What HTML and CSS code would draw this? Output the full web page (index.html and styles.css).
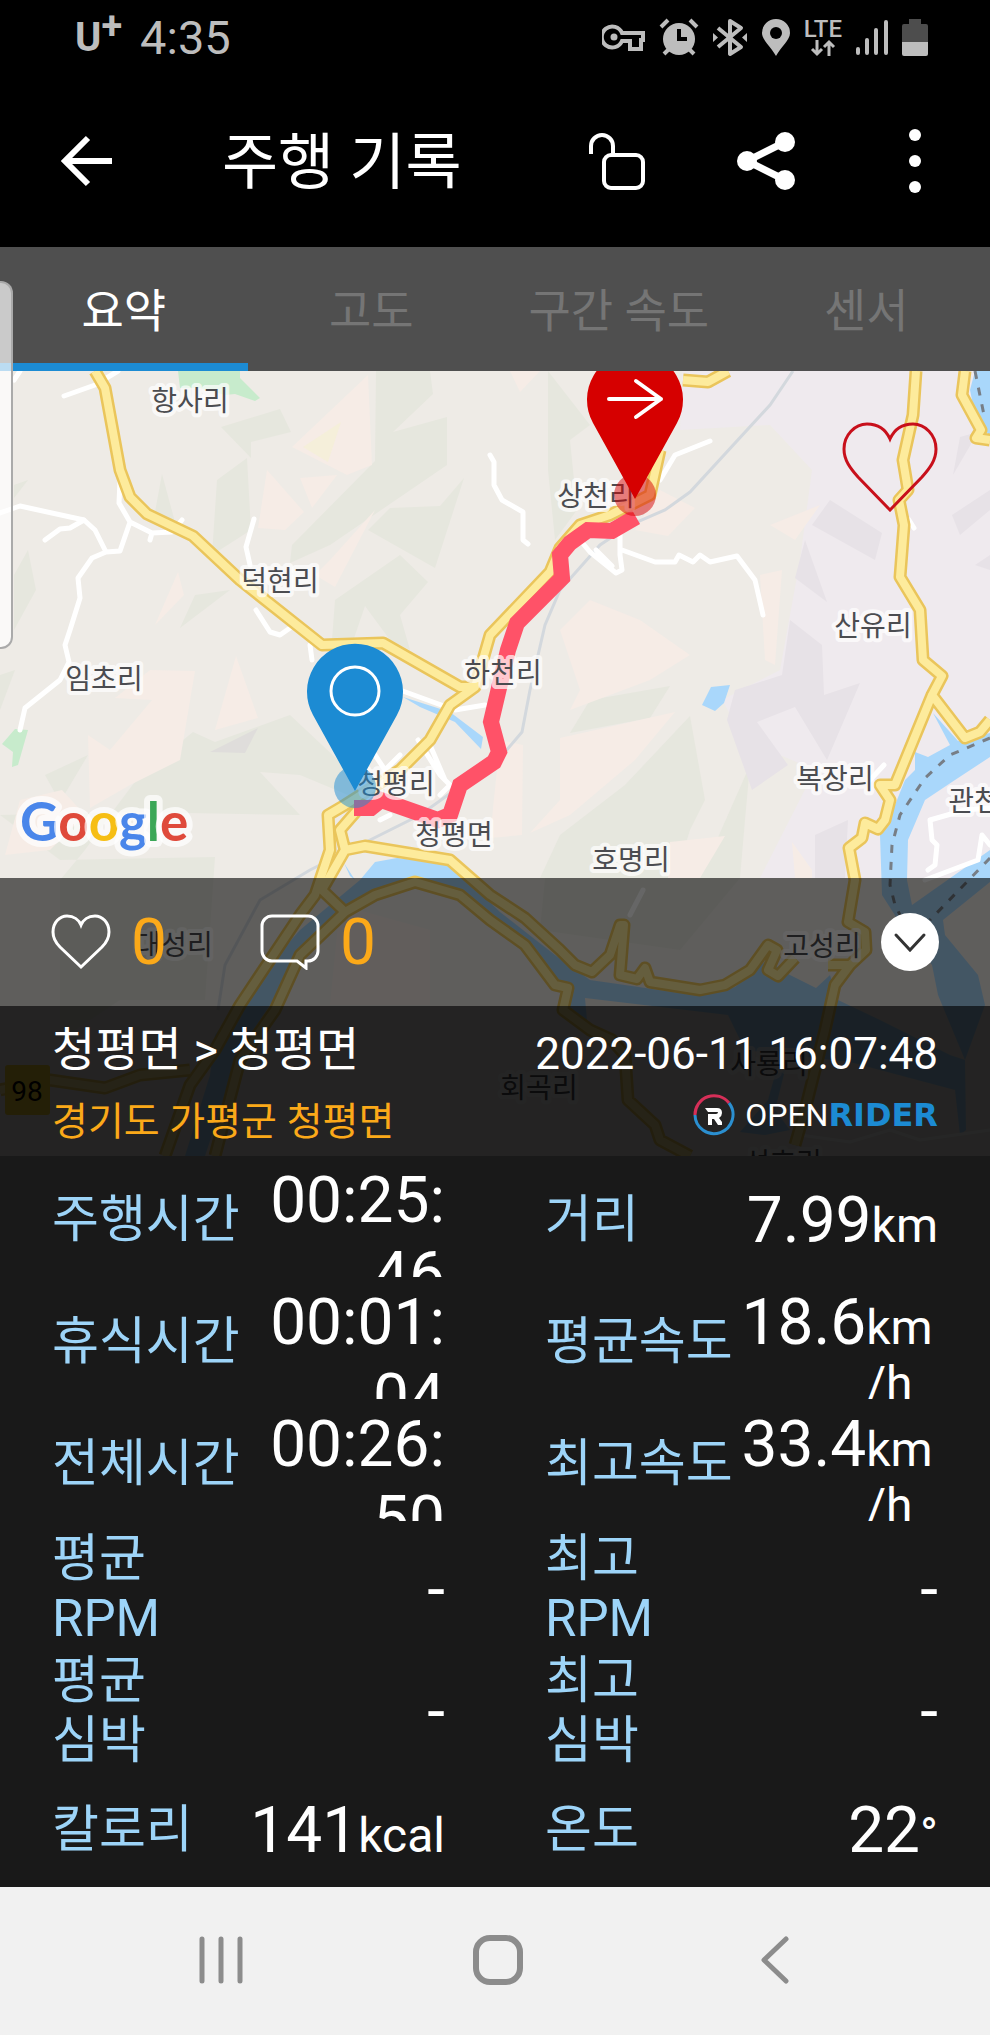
FILE: index.html
```html
<!DOCTYPE html>
<html lang="ko">
	<head>
		<meta charset="utf-8">
		<title>주행 기록</title>
		<meta name="viewport" content="width=device-width, initial-scale=1.0">
		<link rel="stylesheet" href="styles.css">
	</head>
	<body>
		<div class="statusbar">
			<span class="carrier">U<sup>+</sup></span>
			<span class="clock">4:35</span>
			<div class="status-icons">
				<svg width="44" height="40" viewBox="0 0 44 40">
					<g fill="none" stroke="#bdbdbd" stroke-width="4">
						<path d="M20 15H41V22H39V31H28V23H20A10.500 10.500 0 1 1 20 15Z"/>
					</g>
					<circle cx="12" cy="19" r="3.500" fill="#bdbdbd"/>
				</svg>
				<svg width="40" height="40" viewBox="0 0 40 40">
					<circle cx="20" cy="21" r="16" fill="#bdbdbd"/>
					<path d="M2 9L9 2M38 9L31 2M5 36L10 31M35 36L30 31" stroke="#bdbdbd" stroke-width="4"/>
					<path d="M20 11V21H28" fill="none" stroke="#000" stroke-width="4"/>
				</svg>
				<svg width="36" height="40" viewBox="0 0 36 40">
					<path d="M6 10L29 29L18 36V3L29 10L6 29" fill="none" stroke="#bdbdbd" stroke-width="4" stroke-linejoin="round"/>
					<path d="M1 15L6 19.500L1 24ZM35 15L30 19.500L35 24Z" fill="#bdbdbd"/>
				</svg>
				<svg width="30" height="40" viewBox="0 0 30 40">
					<path d="M15 38C10 29 1 22 1 15A14 14 0 0 1 29 15C29 22 20 29 15 38Z" fill="#bdbdbd"/>
					<circle cx="15" cy="15" r="6" fill="#000"/>
				</svg>
				<span class="lte">
					LTE
					<svg width="26" height="18" viewBox="0 0 26 18">
						<path d="M7 1V15M2 10L7 15L12 10M19 17V3M14 8L19 3L24 8" fill="none" stroke="#bdbdbd" stroke-width="3"/>
					</svg>
				</span>
				<svg width="34" height="40" viewBox="0 0 34 40">
					<path d="M3 31V35M12 22V35M21 12V35M31 4V35" stroke="#bdbdbd" stroke-width="4" stroke-linecap="round"/>
				</svg>
				<svg width="26" height="40" viewBox="0 0 26 40">
					<path d="M7 1H19V6H24A2 2 0 0 1 26 8V25H0V8A2 2 0 0 1 2 6H7Z" fill="#4d4d4d"/>
					<path d="M0 24H26V36A2 2 0 0 1 24 38H2A2 2 0 0 1 0 36Z" fill="#bdbdbd"/>
				</svg>
			</div>
		</div>

		<header class="appbar">
			<button class="icon-btn" aria-label="뒤로">
				<svg width="54" height="58" viewBox="0 0 54 58">
					<path d="M52 29H5M28 6L5 29L28 52" fill="none" stroke="#fff" stroke-width="6"/>
				</svg>
			</button>
			<h1>주행 기록</h1>
			<div class="actions">
				<button class="icon-btn" aria-label="잠금 해제">
					<svg width="58" height="58" viewBox="0 0 58 58">
						<path d="M3 22V14A11 11 0 0 1 25 14V23" fill="none" stroke="#fff" stroke-width="4"/>
						<rect x="16" y="23" width="39" height="33" rx="7" fill="none" stroke="#fff" stroke-width="4"/>
					</svg>
				</button>
				<button class="icon-btn" aria-label="공유">
					<svg width="58" height="58" viewBox="0 0 58 58">
						<path d="M48 10L10 29L48 48" fill="none" stroke="#fff" stroke-width="7"/>
						<g fill="#fff">
							<circle cx="48" cy="10" r="10"/>
							<circle cx="10" cy="29" r="10"/>
							<circle cx="48" cy="48" r="10"/>
						</g>
					</svg>
				</button>
				<button class="icon-btn" aria-label="더보기">
					<svg width="58" height="66" viewBox="0 0 58 66">
						<g fill="#fff">
							<circle cx="29" cy="7" r="6"/>
							<circle cx="29" cy="33" r="6"/>
							<circle cx="29" cy="59" r="6"/>
						</g>
					</svg>
				</button>
			</div>
		</header>

		<nav class="tabs" role="tablist">
			<button role="tab" class="tab active" aria-selected="true">요약</button>
			<button role="tab" class="tab">고도</button>
			<button role="tab" class="tab">구간 속도</button>
			<button role="tab" class="tab">센서</button>
			<span class="edge-handle"></span>
		</nav>

		<main>
			<section class="map-area">
				<svg class="map" viewBox="0 371 990 785" preserveAspectRatio="xMidYMid slice">
					<defs>
						<g id="roads">
							<path d="M95 371L105 388L120 470L130 497L147 514L193 536L240 580L322 645L383 643L460 687L475 687"/>
							<path d="M660 450L650 495L610 515L580 525L560 548L550 572L490 635L475 687L450 705L430 740L400 770L345 805L328 815L330 850L315 895L300 915L240 1005L215 1050L190 1085L165 1156"/>
							<path d="M683 380L708 382L728 371M965 371L962 395L981 430L976 438L990 440"/>
							<path d="M360 807L340 830L345 850L365 846L450 860L490 895L525 918L560 950L575 965L592 972L610 955L620 925L624 925L620 975L637 979L645 968L650 982L700 990L725 985L750 970L768 945L777 950L768 970L778 976L795 958M345 850L322 890L345 912L375 895L415 882L460 895L490 920L525 945L555 985L568 988L563 1010L590 1030L612 1040L625 1055L628 1100L655 1125L660 1140L690 1156M345 912L300 955L275 1010L240 1060L215 1156M0 1090L50 1080L105 1088L140 1075L190 1070"/>
							<path d="M916 371L913 415L903 460L908 490L899 500L904 525L900 577L920 610L923 660L942 676L932 695L965 738L980 732L990 720M932 695L895 785L880 785L890 800L885 820L878 829L865 823L862 838L849 848L855 880L848 922L865 932L866 950L850 965H828M850 965L835 985L825 1030L805 1110L795 1145"/>
						</g>
					</defs>
					<rect y="371" width="990" height="785" fill="#eeebe6"/>

					<!-- terrain -->
					<path fill="#efeaee" d="M682 371H990V878H760L815 770L745 740L722 700L780 670L800 560L812 470L770 425L680 430Z"/>
					<g fill="#e6e7de">
						<path d="M221 427L280 409L291 432L251 442V458ZM217 480L247 458L251 530L212 555ZM376 371H430L433 394L393 432L447 417V465L330 545L290 563L292 545L375 461Z"/>
						<path d="M464 478L435 568L368 530L390 508L440 506ZM335 600L400 555L428 582L400 615L410 650L390 640L365 606L350 650L332 640ZM162 474L175 522L155 512ZM180 628L195 595L230 590ZM14 575L28 550L36 590L14 630Z"/>
						<path d="M140 775L193 732L215 742L290 715L338 760L360 800L300 775L260 772L300 815L130 812L0 815L60 860L215 857L205 1000H120L60 1040V880L85 850L110 815ZM548 371L590 425L570 440L577 510L555 540L548 470Z"/>
						<path d="M590 700L670 686L650 718L570 733ZM690 716L705 800L690 830L675 878H540L560 835L625 785ZM750 765L745 820L740 878L680 950L540 930L545 878H700Z"/>
						<path d="M0 675L15 670L0 710ZM45 775L88 755L60 802ZM14 485L28 480L14 498Z"/>
					</g>
					<g fill="#f6ece6">
						<path d="M368 375L372 465L347 475L292 447ZM267 470L304 512L285 530L258 528ZM300 478L337 475L312 508ZM375 510L335 587L315 575L330 560ZM178 572L184 595L155 625Z"/>
						<path d="M150 670L195 671L180 760L130 785L90 808L88 735L110 750L152 700L115 698ZM236 656L258 718L215 730ZM20 800L62 790L85 815L50 850L5 855Z"/>
						<path d="M590 600L640 620L690 655L650 680L570 710L580 690L560 630ZM560 738L675 712L635 760L570 815L530 833L560 800ZM500 740L523 745L522 835L490 838ZM670 842L725 836L700 878H668ZM660 490L695 508L668 536L635 530ZM770 525L820 505L795 540ZM760 575L782 570L775 665L765 660Z"/>
						<path d="M792 842L812 870V878H795ZM510 371L540 371L520 392ZM340 905L430 930V1005H330Z"/>
					</g>
					<path fill="#f5efda" d="M341 422L328 462L303 447Z"/>
					<g fill="#e7e2e7">
						<path d="M790 620L822 645L824 695L860 683L827 760L795 707L757 722L788 765L752 790L727 720L735 690L782 675ZM830 500L882 533L875 560L812 525ZM805 540L827 602L795 578ZM960 437L978 432L953 475ZM990 490L952 515L960 535L990 510ZM815 835L848 820L845 878H815ZM975 565L990 555V570Z"/>
						<path fill="#dfdddb" d="M210 752L258 728L245 753Z"/>
					</g>
					<g fill="#c7ebcc">
						<path d="M178 371H240V378L260 398L255 401L235 394L225 395L200 388H180ZM2 744L15 729L28 730L18 765L12 767L13 752Z"/>
					</g>

					<!-- water -->
					<g fill="#a9d7fb">
						<path d="M975 371H990V436L976 420L970 390ZM711 687L730 685L724 703L715 711L702 705ZM403 697L450 712L483 737L481 749L455 722L420 707ZM344 863L355 880L350 876Z"/>
						<path d="M933 713L958 741L990 733V757L955 780L925 800L908 840L907 880L912 905L990 850V882L943 920L945 935L978 975L985 1005L965 1060L966 1130L960 1135L955 1090L850 1062L745 1050L728 1015L585 998L587 1020L570 1020L560 985L520 943L460 900L415 885L370 900L340 915L295 960L270 1005L240 1050L205 1156H185L210 1075L215 1035L260 975L300 930L360 880L375 862L397 858L450 864L500 912L555 955L590 980L625 985L700 996L735 987L767 960L790 975L816 988L830 975L838 1000L880 1020L950 1055L965 1060L938 995L932 965L898 920L882 895L880 835L895 805L905 780L915 770V752L928 757L950 745Z"/>
						<path d="M775 1075L785 1070L775 1110L790 1130L765 1135L740 1132L768 1100Z"/>
					</g>
					<path d="M990 738L950 755L925 778L900 815L892 845L890 885L895 905L905 925M990 858L930 920M975 371L985 420" fill="none" stroke="#777e86" stroke-width="3" stroke-dasharray="8 9"/>

					<!-- railway -->
					<path d="M793 371L770 405L690 492L665 510L630 525L600 545L560 590L545 625L530 690L522 732L500 758L420 815L310 870L260 900L225 965L218 1010" fill="none" stroke="#d3d8dd" stroke-width="3"/>

					<!-- small roads -->
					<g fill="none" stroke="#fff" stroke-width="5" stroke-linecap="round" stroke-linejoin="round">
						<path d="M64 396L95 385L118 371M14 380L20 371M0 513L20 506L84 520L70 528L60 529L45 540M84 520L95 530L106 552L120 551L130 522L119 503L120 480M106 552L92 558L78 578L80 598L70 630L65 645L69 662L60 680L25 708L20 730M130 522L152 533L172 532L182 520M150 540L152 533M254 519L246 547L250 565M256 610L270 632L280 635L290 628"/>
						<path d="M490 455L494 462V485L502 500L523 512V540L528 544M660 480L675 455L710 441M580 540L590 552L616 573L622 570L620 555V535M596 550L612 566M622 550L655 562L675 562L679 555L693 562L700 555L710 562L737 556L755 580L763 615M909 520L914 528"/>
						<path d="M400 690L455 710L485 705M310 645L312 660M375 755L385 770L400 755M418 740L440 775L450 785L440 795M430 745L445 780M340 835L370 800M380 820L390 815M870 780L884 765M990 808L965 810L930 820L932 840L937 845L935 865L928 870M925 880L978 860L982 835L990 845M630 915L643 890"/>
						<path stroke-width="3" d="M800 1135L850 1142L890 1130L920 1140L990 1130"/>
					</g>

					<!-- main roads: casing, then fill -->
					<use href="#roads" class="road road-case"/>
					<use href="#roads" class="road road-fill"/>

					<!-- ridden route -->
					<path d="M354 808L371 808L381 800L438 820L450 815L460 785L494 762L499 752L491 722L508 650L517 623L562 578L560 555L570 543L588 530L612 531L636 517" fill="none" stroke="#ff5268" stroke-width="16"/>

					<!-- place names -->
					<rect x="5" y="1065" width="45" height="50" rx="3" fill="#f1cd2e"/>
					<g class="place">
						<text x="190" y="411">항사리</text>
						<text x="280" y="591">덕현리</text>
						<text x="104" y="689">임초리</text>
						<text x="596" y="506">상천리</text>
						<text x="873" y="636">산유리</text>
						<text x="503" y="683">하천리</text>
						<text x="396" y="794">청평리</text>
						<text x="454" y="845">청평면</text>
						<text x="835" y="789">복장리</text>
						<text x="987" y="811">관천리</text>
						<text x="631" y="870">호명리</text>
						<text x="174" y="955">대성리</text>
						<text x="822" y="956">고성리</text>
						<text x="539" y="1098">회곡리</text>
						<text x="769" y="1074">사룡리</text>
						<text x="783" y="1173">성호리</text>
					</g>
					<text class="route-no" x="27" y="1101">98</text>

					<!-- start / finish pins -->
					<circle cx="635" cy="495" r="21" fill="#d60000" fill-opacity=".5"/>
					<g transform="translate(635 399)">
						<path d="M0 100L-42 24A48 48 0 1 1 42 24Z" fill="#d60000"/>
						<path d="M-26 0H26M1 -18L26 0L1 18" fill="none" stroke="#fff" stroke-width="4" stroke-linecap="round" stroke-linejoin="round"/>
					</g>
					<circle cx="355" cy="787" r="21" fill="#1c8bd3" fill-opacity=".5"/>
					<g transform="translate(355 691)">
						<path d="M0 100L-42 24A48 48 0 1 1 42 24Z" fill="#1c8bd3"/>
						<circle r="24" fill="none" stroke="#fff" stroke-width="3"/>
					</g>

					<text class="google" x="20" y="841"><tspan fill="#4a86ea">G</tspan><tspan fill="#df4a3b">o</tspan><tspan fill="#f6be14">o</tspan><tspan fill="#4a86ea">g</tspan><tspan fill="#3ba757">l</tspan><tspan fill="#df4a3b">e</tspan></text>
				</svg>

				<div class="map-view">
					<button class="icon-btn favorite" aria-label="즐겨찾기">
						<svg width="96" height="90" viewBox="0 0 96 90">
							<path d="M48 88L16 55C8 46 2 38 2 27C2 13 13 2 25 2C36 2 44 8 48 17C52 8 60 2 71 2C83 2 94 13 94 27C94 38 88 46 80 55Z" fill="none" stroke="#c8101b" stroke-width="3"/>
						</svg>
					</button>
				</div>

				<div class="social">
					<button class="count">
						<svg width="60" height="56" viewBox="0 0 60 56">
							<path d="M30 53L9 33C4 28 2 24 2 18C2 8 9 2 16 2C23 2 28 6 30 11C32 6 37 2 44 2C51 2 58 8 58 18C58 24 56 28 51 33Z" fill="none" stroke="#fff" stroke-width="3"/>
						</svg>
						0
					</button>
					<button class="count">
						<svg width="60" height="56" viewBox="0 0 60 56">
							<path d="M12 2H48A10 10 0 0 1 58 12V37A10 10 0 0 1 48 47H46V54L37 47H12A10 10 0 0 1 2 37V12A10 10 0 0 1 12 2Z" fill="none" stroke="#fff" stroke-width="3"/>
						</svg>
						0
					</button>
					<button class="icon-btn collapse" aria-label="접기">
						<svg width="58" height="58" viewBox="0 0 58 58">
							<circle cx="29" cy="29" r="29" fill="#fff"/>
							<path d="M15 22L29 37L43 22" fill="none" stroke="#333" stroke-width="3" stroke-linecap="round"/>
						</svg>
					</button>
				</div>

				<div class="ride-info">
					<div>
						<p class="ride-title">청평면 &gt; 청평면</p>
						<p class="ride-place">경기도 가평군 청평면</p>
					</div>
					<div class="ride-meta">
						<time datetime="2022-06-11T16:07:48">2022-06-11 16:07:48</time>
						<p class="brand">
							<svg width="42" height="42" viewBox="0 0 42 42">
								<path d="M2 21A19 19 0 0 1 36 9" fill="none" stroke="#d62f58" stroke-width="3"/>
								<path d="M36 9A19 19 0 1 1 2 21" fill="none" stroke="#2b8fd0" stroke-width="3"/>
								<path d="M12 14H24Q29 14 29 19Q29 22 26 24L29 28V31H25L21 25H19V31H15V20H23Q25 20 25 18H15Z" fill="#fff"/>
							</svg>
							<span class="open">OPEN</span><span class="rider">RIDER</span>
						</p>
					</div>
				</div>
			</section>

			<dl class="stats">
				<div class="stat long"><dt>주행시간</dt><dd>00:25:<wbr>46</dd></div>
				<div class="stat"><dt>거리</dt><dd>7.99<span class="unit">km</span></dd></div>
				<div class="stat long"><dt>휴식시간</dt><dd>00:01:<wbr>04</dd></div>
				<div class="stat speed"><dt>평균속도</dt><dd>18.6<span class="unit">km<wbr>/h</span></dd></div>
				<div class="stat long"><dt>전체시간</dt><dd>00:26:<wbr>50</dd></div>
				<div class="stat speed"><dt>최고속도</dt><dd>33.4<span class="unit">km<wbr>/h</span></dd></div>
				<div class="stat"><dt>평균 RPM</dt><dd>-</dd></div>
				<div class="stat"><dt>최고 RPM</dt><dd>-</dd></div>
				<div class="stat"><dt>평균 심박</dt><dd>-</dd></div>
				<div class="stat"><dt>최고 심박</dt><dd>-</dd></div>
				<div class="stat"><dt>칼로리</dt><dd>141<span class="unit">kcal</span></dd></div>
				<div class="stat"><dt>온도</dt><dd>22<span class="unit">°</span></dd></div>
			</dl>
		</main>

		<footer class="softkeys">
			<button class="icon-btn" aria-label="최근 앱">
				<svg width="46" height="50" viewBox="0 0 46 50">
					<path d="M4 4V46M23 4V46M42 4V46" stroke="#8c8c8c" stroke-width="5" stroke-linecap="round"/>
				</svg>
			</button>
			<button class="icon-btn" aria-label="홈">
				<svg width="50" height="50" viewBox="0 0 50 50">
					<rect x="3" y="3" width="44" height="44" rx="14" fill="none" stroke="#8c8c8c" stroke-width="6"/>
				</svg>
			</button>
			<button class="icon-btn" aria-label="뒤로">
				<svg width="30" height="50" viewBox="0 0 30 50">
					<path d="M26 4L4 25L26 46" fill="none" stroke="#8c8c8c" stroke-width="5" stroke-linecap="round" stroke-linejoin="round"/>
				</svg>
			</button>
		</footer>
	</body>
</html>
```
FILE: styles.css
```css
* {
	box-sizing: border-box;
	margin: 0;
	padding: 0;
}
body {
	background: #f1f1f1;
	color: #fff;
	font-family: Roboto, 'Noto Sans CJK KR', sans-serif;
}
button {
	border: none;
	background: none;
	color: inherit;
	font-family: inherit;
}
svg {
	display: block;
}
.icon-btn {
	flex: none;
}

/* status bar */
.statusbar {
	display: flex;
	align-items: center;
	height: 76px;
	padding: 0 62px 0 75px;
	background: #000;
	color: #bdbdbd;
}
.carrier {
	display: flex;
	font-size: 40px;
	font-weight: 700;
	line-height: 48px;
}
.carrier sup {
	font-size: 38px;
	line-height: 24px;
}
.clock {
	margin-left: 18px;
	font-size: 47px;
	line-height: 60px;
}
.status-icons {
	display: flex;
	align-items: center;
	gap: 13px;
	margin-left: auto;
}
.lte {
	display: flex;
	flex-direction: column;
	align-items: center;
	font-size: 24px;
	font-weight: 500;
	line-height: 20px;
}

/* title bar */
.appbar {
	display: flex;
	align-items: center;
	height: 171px;
	padding: 0 46px 2px 60px;
	background: #000;
}
.appbar h1 {
	padding-top: 4px;
	margin-left: 108px;
	font-size: 61px;
	font-weight: 400;
	line-height: 80px;
}
.actions {
	display: flex;
	align-items: center;
	gap: 91px;
	margin-left: auto;
}

/* tabs */
.tabs {
	position: relative;
	display: grid;
	grid-template-columns: repeat(4, 1fr);
	height: 124px;
	background: #4f4f4f;
}
.tab {
	padding-bottom: 4px;
	border-top: 8px solid transparent;
	border-bottom: 8px solid transparent;
	color: #757575;
	font-size: 46px;
}
.tab.active {
	border-bottom-color: #1c8bd3;
	color: #fff;
}
.edge-handle {
	position: absolute;
	z-index: 2;
	top: 34px;
	left: 0;
	width: 13px;
	height: 368px;
	border: 2px solid #aaa;
	border-left: none;
	border-radius: 0 12px 12px 0;
	background: rgba(255, 255, 255, .7);
}

/* map */
.map-area {
	position: relative;
	overflow: hidden;
}
.map {
	position: absolute;
	top: 0;
	left: 0;
	width: 100%;
	height: 100%;
}
.road {
	fill: none;
	stroke-linejoin: round;
}
.road-case {
	stroke: #eac55b;
	stroke-width: 13;
}
.road-fill {
	stroke: #fdeb9c;
	stroke-width: 8;
}
.place text {
	fill: #4b4c50;
	stroke: rgba(255, 255, 255, .7);
	stroke-width: 8px;
	stroke-linejoin: round;
	paint-order: stroke;
	font-family: 'Noto Sans CJK KR', sans-serif;
	font-size: 28px;
	text-anchor: middle;
}
.route-no {
	fill: #000;
	font-size: 28px;
	text-anchor: middle;
}
.google {
	stroke: rgba(255, 255, 255, .7);
	stroke-width: 12px;
	stroke-linejoin: round;
	paint-order: stroke;
	font-family: Lato, sans-serif;
	font-size: 53px;
	font-weight: 700;
}
.map-view {
	position: relative;
	display: flex;
	justify-content: flex-end;
	height: 507px;
	padding: 51px 52px 0;
}
.favorite {
	align-self: flex-start;
}
.social {
	position: relative;
	display: flex;
	align-items: center;
	gap: 93px;
	height: 128px;
	padding: 0 51px;
	background: rgba(0, 0, 0, .6);
}
.count {
	display: flex;
	align-items: center;
	gap: 20px;
	color: #fba919;
	font-size: 64px;
	line-height: 75px;
}
.collapse {
	margin-left: auto;
}
.ride-info {
	position: relative;
	display: flex;
	justify-content: space-between;
	height: 150px;
	padding: 12px 52px 0;
	background: rgba(0, 0, 0, .85);
}
.ride-title {
	font-size: 47px;
	line-height: 64px;
}
.ride-place {
	margin-top: 12px;
	color: #fba919;
	font-size: 39px;
	line-height: 56px;
}
.ride-meta {
	padding-top: 8px;
	text-align: right;
}
.ride-meta time {
	display: block;
	font-size: 44px;
	line-height: 56px;
}
.brand {
	display: flex;
	align-items: center;
	justify-content: flex-end;
	margin-top: 12px;
	font-size: 32px;
	line-height: 42px;
}
.open {
	margin-left: 10px;
}
.rider {
	color: #1c8bd3;
	font-family: 'DejaVu Sans', sans-serif;
	font-weight: 700;
}

/* ride numbers */
.stats {
	display: grid;
	grid-template-columns: 1fr 1fr;
	grid-auto-rows: 114px;
	gap: 8px 100px;
	padding: 7px 52px 0;
	background: #191919;
}
.stat {
	display: grid;
	grid-template-columns: 1fr 1fr;
	align-items: center;
}
.stat dt {
	color: #9dd4f8;
	font-size: 51px;
	line-height: 60px;
	word-break: keep-all;
}
.stat dd {
	display: flex;
	align-items: baseline;
	justify-content: flex-end;
	font-size: 64px;
	line-height: 75px;
}
.stat.long dd {
	display: block;
	height: 114px;
	overflow: hidden;
	text-align: right;
}
.stat.speed dd {
	height: 114px;
	overflow: hidden;
}
.unit {
	font-size: 48px;
	line-height: 56px;
}

/* navigation keys */
.softkeys {
	display: grid;
	grid-template-columns: repeat(3, 1fr);
	justify-items: center;
	align-items: center;
	height: 148px;
	padding: 0 76px 2px 82px;
	background: #f1f1f1;
}
```
